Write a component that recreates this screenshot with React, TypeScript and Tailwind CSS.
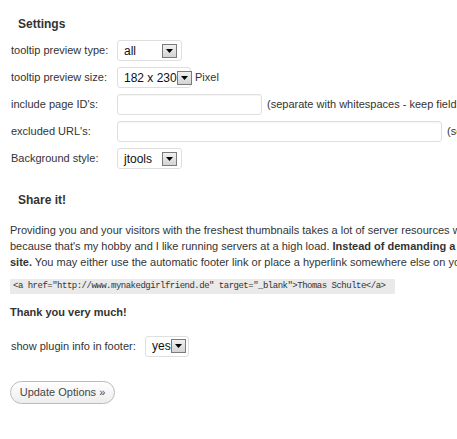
const Arrow = () => (
  <span className="flex h-[14px] w-[15px] shrink-0 items-center justify-center border border-[#7a7a7a] bg-gradient-to-b from-[#f0f0f0] to-[#d4d4d4]">
    <svg width="7" height="4" viewBox="0 0 7 4">
      <path d="M0 0h7L3.5 4z" fill="#000" />
    </svg>
  </span>
);

const FakeSelect = ({ value, width }: { value: string; width: string }) => (
  <div
    className={`flex h-[21px] ${width} shrink-0 items-center justify-between rounded-[3px] border border-[#dfdfdf] bg-white pl-[6px] pr-[4px] text-[12px] text-[#111]`}
  >
    <span className="leading-none">{value}</span>
    <Arrow />
  </div>
);

const TextBox = ({ width }: { width: string }) => (
  <input
    type="text"
    className={`h-[21px] ${width} shrink-0 rounded-[3px] border border-[#dfdfdf] bg-white shadow-[inset_0_1px_1px_rgba(0,0,0,0.04)] outline-none`}
  />
);

export default function App() {
  return (
    <div className="h-[439px] w-[457px] overflow-hidden bg-white pl-[10px] font-['Liberation_Sans',Arial,sans-serif] text-[11px] text-[#333]">
      <h2 className="pl-[8px] pt-[16px] text-[12px] font-bold leading-[16px]">Settings</h2>

      <div className="mt-[8px] flex flex-col gap-[6px] pl-[1px]">
        <div className="flex h-[21px] items-center whitespace-nowrap">
          <span className="w-[106px] shrink-0">tooltip preview type:</span>
          <FakeSelect value="all" width="w-[65px]" />
        </div>
        <div className="flex h-[21px] items-center whitespace-nowrap">
          <span className="w-[106px] shrink-0">tooltip preview size:</span>
          <FakeSelect value="182 x 230" width="w-[74px]" />
          <span className="ml-[4px]">Pixel</span>
        </div>
        <div className="flex h-[21px] items-center whitespace-nowrap">
          <span className="w-[106px] shrink-0">include page ID's:</span>
          <TextBox width="w-[145px]" />
          <span className="ml-[5px]">(separate with whitespaces - keep field empty for all pages)</span>
        </div>
        <div className="flex h-[21px] items-center whitespace-nowrap">
          <span className="w-[106px] shrink-0">excluded URL's:</span>
          <TextBox width="w-[325px]" />
          <span className="ml-[5px]">(separate with whitespaces)</span>
        </div>
        <div className="flex h-[21px] items-center whitespace-nowrap">
          <span className="w-[106px] shrink-0">Background style:</span>
          <FakeSelect value="jtools" width="w-[65px]" />
        </div>
      </div>

      <h2 className="mt-[23px] pl-[8px] text-[12px] font-bold leading-[16px]">Share it!</h2>

      <p className="mt-[14px] whitespace-nowrap leading-[16px]">
        Providing you and your visitors with the freshest thumbnails takes a lot of server resources which I pay for myself,
        <br />
        because that's my hobby and I like running servers at a high load.{" "}
        <b>Instead of demanding a fee, I only ask you to link back to my</b>
        <br />
        <b>site.</b> You may either use the automatic footer link or place a hyperlink somewhere else on your page.
      </p>

      <div className="mt-[9px] flex h-[15px] w-[385px] items-center whitespace-nowrap bg-[#eaeaea] pl-[3px] font-['Liberation_Mono',monospace] text-[9px] tracking-[-0.5px] text-[#333]">
        {'<a href="http://www.mynakedgirlfriend.de" target="_blank">Thomas Schulte</a>'}
      </div>

      <p className="mt-[10px] font-bold leading-[16px]">Thank you very much!</p>

      <div className="mt-[15px] flex h-[22px] items-center whitespace-nowrap pl-[1px]">
        <span className="w-[134px] shrink-0">show plugin info in footer:</span>
        <FakeSelect value="yes" width="w-[44px]" />
      </div>

      <button
        type="button"
        className="mt-[24px] flex h-[23px] w-[105px] items-center justify-center rounded-full border border-[#bbb] bg-gradient-to-b from-white to-[#ededed] text-[11px] text-[#464646]"
      >
        Update Options »
      </button>
    </div>
  );
}
